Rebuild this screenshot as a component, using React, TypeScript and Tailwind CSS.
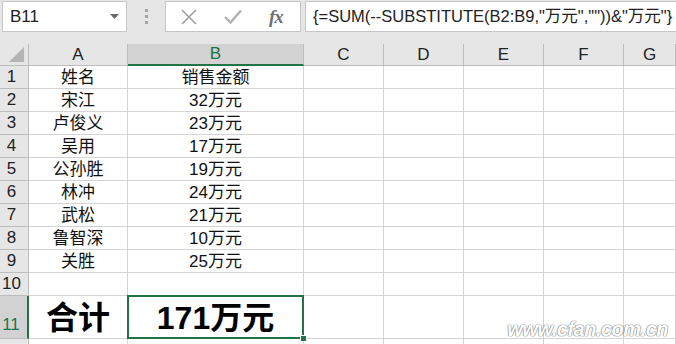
import React from "react";

const rows: [string, string, string][] = [
  ["1", "姓名", "销售金额"],
  ["2", "宋江", "32万元"],
  ["3", "卢俊义", "23万元"],
  ["4", "吴用", "17万元"],
  ["5", "公孙胜", "19万元"],
  ["6", "林冲", "24万元"],
  ["7", "武松", "21万元"],
  ["8", "鲁智深", "10万元"],
  ["9", "关胜", "25万元"],
  ["10", "", ""],
];

const font = "[font-family:'Liberation_Sans','Noto_Sans_CJK_SC',sans-serif]";

export default function App() {
  return (
    <div className={`w-[676px] h-[344px] overflow-hidden bg-white relative ${font}`}>
      {/* toolbar */}
      <div className="h-[44px] bg-[#e6e6e6] flex items-start pt-[1px]">
        <div className="ml-[2px] w-[125px] h-[31px] bg-white border border-[#c6c6c6] flex items-center justify-between pl-[7px] pr-[7px]">
          <span className="text-[17px] text-[#222] leading-none">B11</span>
          <svg width="9" height="5" viewBox="0 0 9 5"><path d="M0 0h9L4.5 5z" fill="#6a6a6a" /></svg>
        </div>
        <div className="w-[38px] h-[31px] flex flex-col items-center justify-center gap-[3px]">
          <div className="w-[3px] h-[3px] bg-[#a6a6a6]" />
          <div className="w-[3px] h-[3px] bg-[#a6a6a6]" />
          <div className="w-[3px] h-[3px] bg-[#a6a6a6]" />
        </div>
        <div className="w-[136px] h-[31px] bg-white border border-[#c6c6c6] flex items-center">
          <svg className="ml-[15px]" width="16" height="16" viewBox="0 0 16 16">
            <path d="M1 1L15 15M15 1L1 15" stroke="#a0a0a0" strokeWidth="1.6" />
          </svg>
          <svg className="ml-[27px]" width="18" height="15" viewBox="0 0 18 15">
            <path d="M1 8L6.5 13.5L17 1.5" stroke="#b0b0b0" strokeWidth="2.4" fill="none" />
          </svg>
          <span className="ml-[27px] text-[19px] italic text-[#707070] leading-none [font-family:'Liberation_Serif',serif] font-bold tracking-[-1px]">fx</span>
        </div>
        <div className="ml-[4px] flex-1 h-[31px] bg-white border border-[#c6c6c6] border-r-0 flex items-center pl-[7px]">
          <span className="text-[16.5px] text-[#222] leading-none whitespace-nowrap">{'{=SUM(--SUBSTITUTE(B2:B9,"万元",""))&"万元"}'}</span>
        </div>
      </div>

      {/* grid */}
      <div className="grid grid-cols-[29px_99px_176px_80px_80px_80px_80px_1fr] grid-rows-[22px_repeat(10,23px)_43px_1fr] h-[300px]">
        {/* header row */}
        <div className="bg-[#e6e6e6] border-r border-b border-[#bdbdbd] relative">
          <svg className="absolute right-[4px] bottom-[3px]" width="15" height="15" viewBox="0 0 15 15"><path d="M15 0V15H0z" fill="#b4b4b4" /></svg>
        </div>
        <div className="bg-[#e6e6e6] border-r border-b border-[#bdbdbd] flex items-center justify-center text-[17px] text-[#222]">A</div>
        <div className="bg-[#d2d2d2] border-r border-[#bdbdbd] border-b-2 border-b-[#217346] flex items-center justify-center text-[17px] text-[#217346]">B</div>
        {["C", "D", "E", "F", "G"].map((c) => (
          <div key={c} className="bg-[#e6e6e6] border-r border-b border-[#bdbdbd] flex items-center justify-center text-[17px] text-[#222]">{c}</div>
        ))}

        {rows.map(([n, a, b]) => (
          <React.Fragment key={n}>
            <div className="bg-[#e6e6e6] border-r border-b border-[#bdbdbd] flex items-center justify-center pr-[5px] text-[17px] text-[#222]">{n}</div>
            <div className="border-r border-b border-[#d4d4d4] flex items-center justify-center pt-[1px] text-[17px] text-[#111]">{a}</div>
            <div className="border-r border-b border-[#d4d4d4] flex items-center justify-center pt-[1px] text-[17px] text-[#111]">{b}</div>
            {[0, 1, 2, 3, 4].map((i) => (
              <div key={i} className="border-r border-b border-[#d4d4d4]" />
            ))}
          </React.Fragment>
        ))}

        {/* row 11 */}
        <div className="bg-[#d2d2d2] border-r-2 border-r-[#217346] border-b border-[#bdbdbd] flex items-end justify-center pr-[5px] pb-[1px] text-[17px] text-[#217346]">11</div>
        <div className="border-r border-b border-[#d4d4d4] flex items-end justify-center pb-[1px] text-[32px] font-bold text-black leading-[38px]">合计</div>
        <div className="border-r border-b border-[#d4d4d4] flex items-end justify-center pb-[1px] text-[32px] font-bold text-black leading-[38px] relative">
          171万元
          <div className="absolute -left-[1px] -top-[1px] -right-[1px] -bottom-[1px] border-2 border-[#217346]" />
          <div className="absolute -right-[4px] -bottom-[4px] w-[7px] h-[7px] bg-[#217346] border border-white" />
        </div>
        {[0, 1, 2, 3, 4].map((i) => (
          <div key={i} className="border-r border-b border-[#d4d4d4]" />
        ))}

        {/* tail row */}
        <div className="bg-[#e6e6e6] border-r border-[#bdbdbd]" />
        {[0, 1, 2, 3, 4, 5, 6].map((i) => (
          <div key={i} className="border-r border-[#d4d4d4]" />
        ))}
      </div>

      {/* watermark */}
      <div className="absolute right-[8px] bottom-[5px] text-[20px] italic font-bold text-white tracking-[-0.5px] [font-family:'Liberation_Sans',sans-serif] [text-shadow:0_0_1px_#777,0_0_1px_#777,0_0_1px_#777] leading-none">
        www.cfan.com.cn
      </div>
    </div>
  );
}
